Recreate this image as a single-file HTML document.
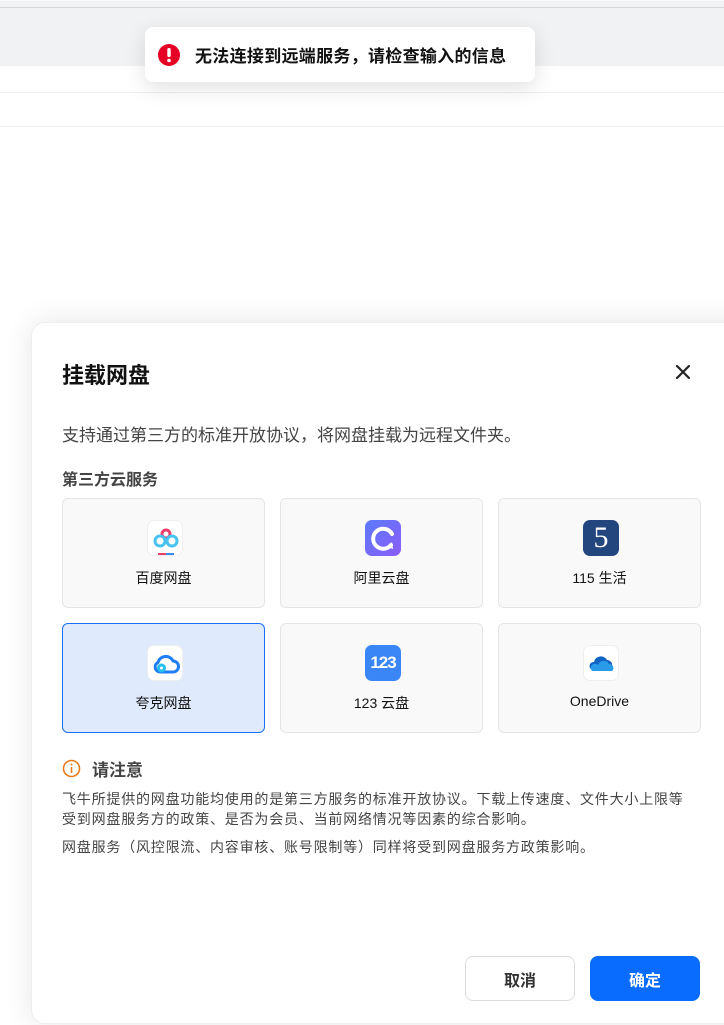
<!DOCTYPE html>
<html><head><meta charset="utf-8"><style>
*{box-sizing:border-box;margin:0;padding:0}
body{width:724px;height:1025px;overflow:hidden;position:relative;background:#fff;font-family:"Liberation Sans","Noto Sans CJK SC",sans-serif;}
.top{position:absolute;left:0;top:0;width:724px;height:66px;background:#f1f2f4;border-top:1px solid #fafafa}
.top:before{content:"";position:absolute;left:0;right:0;top:6px;height:1px;background:#d8d8d8}
.ln{position:absolute;left:0;width:724px;height:1px;background:#efefef}
.toast{position:absolute;left:145px;top:27px;width:390px;height:55px;background:#fff;border-radius:8px;box-shadow:0 6px 22px rgba(0,0,0,.12);display:flex;align-items:center;padding-left:12px}
.toast b{font-size:17px;color:#111;margin-left:14px;letter-spacing:.3px}
.modal{position:absolute;left:31px;top:322px;width:720px;height:702px;background:#fff;border-radius:14px;box-shadow:0 0 28px rgba(0,0,0,.1);border:1px solid #eee}
.title{position:absolute;left:30px;top:35px;font-size:22px;font-weight:bold;color:#111}
.close{position:absolute;left:640px;top:38px}
.desc{position:absolute;left:30px;top:98px;font-size:17px;color:#444}
.sub{position:absolute;left:30px;top:143px;font-size:16px;font-weight:bold;color:#444}
.card{position:absolute;width:203px;height:110px;background:#f9f9f9;border:1px solid #e5e5e5;border-radius:6px;text-align:center}
.card.sel{background:#dfebfd;border-color:#1a6ff6}
.ic{position:absolute;left:84px;top:21px;width:36px;height:36px;border-radius:7px;background:#fff;border:1px solid #eee;overflow:hidden}
.lb{position:absolute;left:0;right:0;top:69px;font-size:14px;color:#111}
.note{position:absolute;left:30px;top:433px;font-size:17px;font-weight:bold;color:#444;display:flex;align-items:center}
.p{position:absolute;left:30px;font-size:14px;color:#444;line-height:20px;width:636px;letter-spacing:.8px}
.btn{position:absolute;top:633px;width:110px;height:45px;border-radius:8px;font-size:16px;font-weight:bold;display:flex;align-items:center;justify-content:center}
</style></head><body>
<div class="top"></div>
<div class="ln" style="top:92px"></div>
<div class="ln" style="top:126px"></div>
<div class="toast"><svg width="24" height="24" viewBox="0 0 24 24"><circle cx="12" cy="12" r="11" fill="#e60026"/><rect x="10.3" y="5" width="3.4" height="9" rx="1.6" fill="#fff"/><circle cx="12" cy="17.5" r="1.8" fill="#fff"/></svg><b>无法连接到远端服务，请检查输入的信息</b></div>
<div class="modal">
<div class="title">挂载网盘</div>
<svg class="close" width="22" height="22" viewBox="0 0 22 22"><path d="M5 5L17 17M17 5L5 17" stroke="#222" stroke-width="2.2" stroke-linecap="round"/></svg>
<div class="desc">支持通过第三方的标准开放协议，将网盘挂载为远程文件夹。</div>
<div class="sub">第三方云服务</div>

<div class="card" style="left:30px;top:175px"><div class="ic"><svg width="36" height="36" viewBox="0 0 36 36"><circle cx="18" cy="13" r="4" fill="none" stroke="#ef3d6a" stroke-width="3"/><circle cx="12" cy="20" r="5" fill="none" stroke="#48c3f0" stroke-width="3"/><circle cx="24" cy="20" r="5" fill="none" stroke="#48c3f0" stroke-width="3"/><rect x="10" y="32" width="8" height="2" fill="#ef3d6a"/><rect x="18" y="32" width="8" height="2" fill="#3c8af0"/></svg></div><div class="lb">百度网盘</div></div>
<div class="card" style="left:248px;top:175px"><div class="ic" style="background:linear-gradient(135deg,#5b7bff,#8b5cf6);border:none"><svg width="36" height="36" viewBox="0 0 36 36"><path d="M26 25A10 10 0 1 1 27 14" fill="none" stroke="#fff" stroke-width="4" stroke-linecap="round"/><path d="M22 27L28 29L27 22" fill="#fff"/></svg></div><div class="lb">阿里云盘</div></div>
<div class="card" style="left:466px;top:175px"><div class="ic" style="background:#23467f;border:none;color:#fff;font-family:'Liberation Serif',serif;font-size:30px;line-height:36px">5</div><div class="lb">115 生活</div></div>

<div class="card sel" style="left:30px;top:300px"><div class="ic"><svg width="36" height="36" viewBox="0 0 36 36"><path d="M12 26A5 5 0 0 1 10 16.5A8 8 0 0 1 25 15A5.5 5.5 0 0 1 25 26Z" fill="none" stroke="#1f7ef5" stroke-width="3" stroke-linejoin="round"/><circle cx="13.5" cy="22" r="3" fill="none" stroke="#25c0ee" stroke-width="3"/></svg></div><div class="lb">夸克网盘</div></div>
<div class="card" style="left:248px;top:300px"><div class="ic" style="background:#3a86f7;border:none;color:#fff;font-weight:bold;font-size:17px;line-height:36px;letter-spacing:-1px">123</div><div class="lb">123 云盘</div></div>
<div class="card" style="left:466px;top:300px"><div class="ic"><svg width="36" height="36" viewBox="0 0 36 36"><path d="M9 24A4 4 0 0 1 10 16A7 7 0 0 1 23 14A5 5 0 0 1 28 20L9 24Z" fill="#0f63c4"/><path d="M8 25A4 4 0 0 1 14 19A6 6 0 0 1 25 18A4 4 0 0 1 28 25Z" fill="#2a9be8"/></svg></div><div class="lb">OneDrive</div></div>

<div class="note"><svg width="19" height="19" viewBox="0 0 19 19"><circle cx="9.5" cy="9.5" r="8" fill="none" stroke="#e87b1c" stroke-width="1.6"/><rect x="8.7" y="8" width="1.6" height="6" fill="#e87b1c"/><circle cx="9.5" cy="5.5" r="1" fill="#e87b1c"/></svg><span style="margin-left:11px">请注意</span></div>
<div class="p" style="top:466px">飞牛所提供的网盘功能均使用的是第三方服务的标准开放协议。下载上传速度、文件大小上限等受到网盘服务方的政策、是否为会员、当前网络情况等因素的综合影响。</div>
<div class="p" style="top:514px">网盘服务（风控限流、内容审核、账号限制等）同样将受到网盘服务方政策影响。</div>
<div class="btn" style="left:433px;border:1px solid #ddd;color:#333;background:#fff">取消</div>
<div class="btn" style="left:558px;background:#0a6cff;color:#fff">确定</div>
</div>
</body></html>
